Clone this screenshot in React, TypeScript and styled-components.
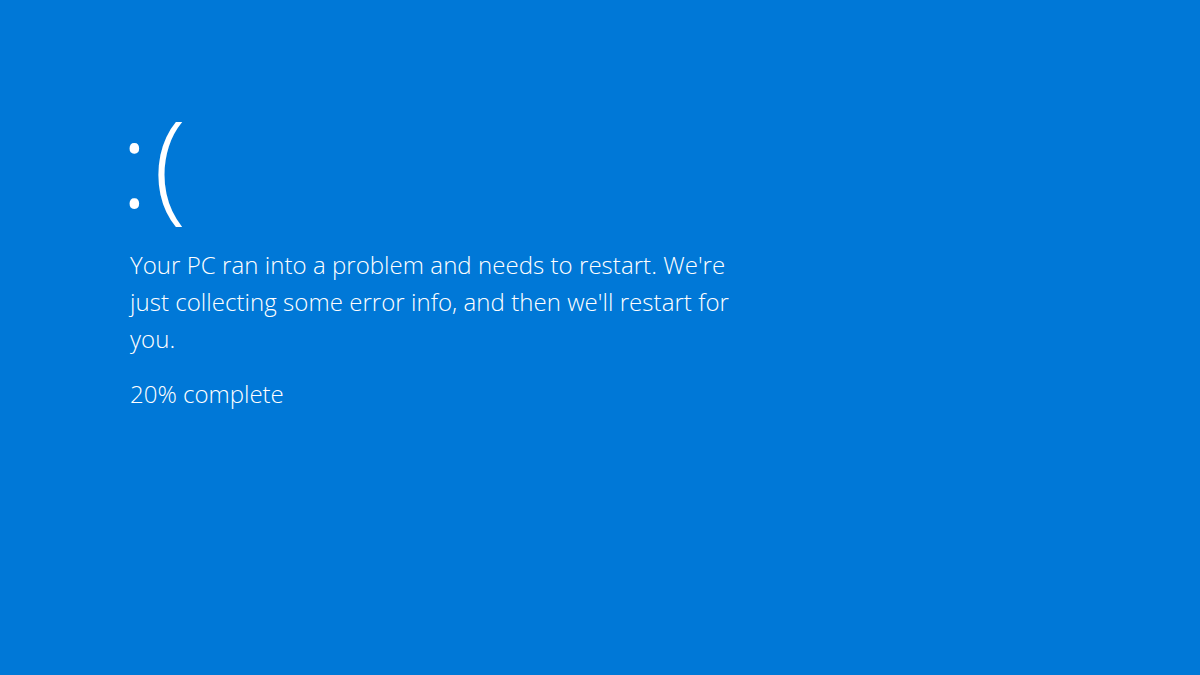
import React from 'react';
import styled, { createGlobalStyle } from 'styled-components';

const GlobalStyle = createGlobalStyle`
  html, body {
    margin: 0;
    padding: 0;
    background: #0078d7;
  }
`;

const Screen = styled.main`
  width: 1200px;
  height: 675px;
  box-sizing: border-box;
  background: #0078d7;
  color: #ffffff;
  font-family: "Open Sans", "Noto Sans", sans-serif;
  font-weight: 300;
  padding: 82px 0 0 130px;
  display: flex;
  flex-direction: column;
`;

const Face = styled.div`
  font-size: 120px;
  line-height: 160px;
  height: 160px;
  margin-left: -10px;
  letter-spacing: 5px;
`;

const Message = styled.p`
  margin: 4px 0 0;
  font-size: 24px;
  line-height: 37px;
  letter-spacing: 0.05px;
  width: 614px;
`;

const Progress = styled.p`
  margin: 18px 0 0;
  font-size: 24px;
  line-height: 37px;
`;

const App: React.FC = () => {
  return (
    <>
      <GlobalStyle />
      <Screen>
        <Face>:(</Face>
        <Message>
          Your PC ran into a problem and needs to restart. We're just collecting some error
          info, and then we'll restart for you.
        </Message>
        <Progress>20% complete</Progress>
      </Screen>
    </>
  );
};

export default App;
